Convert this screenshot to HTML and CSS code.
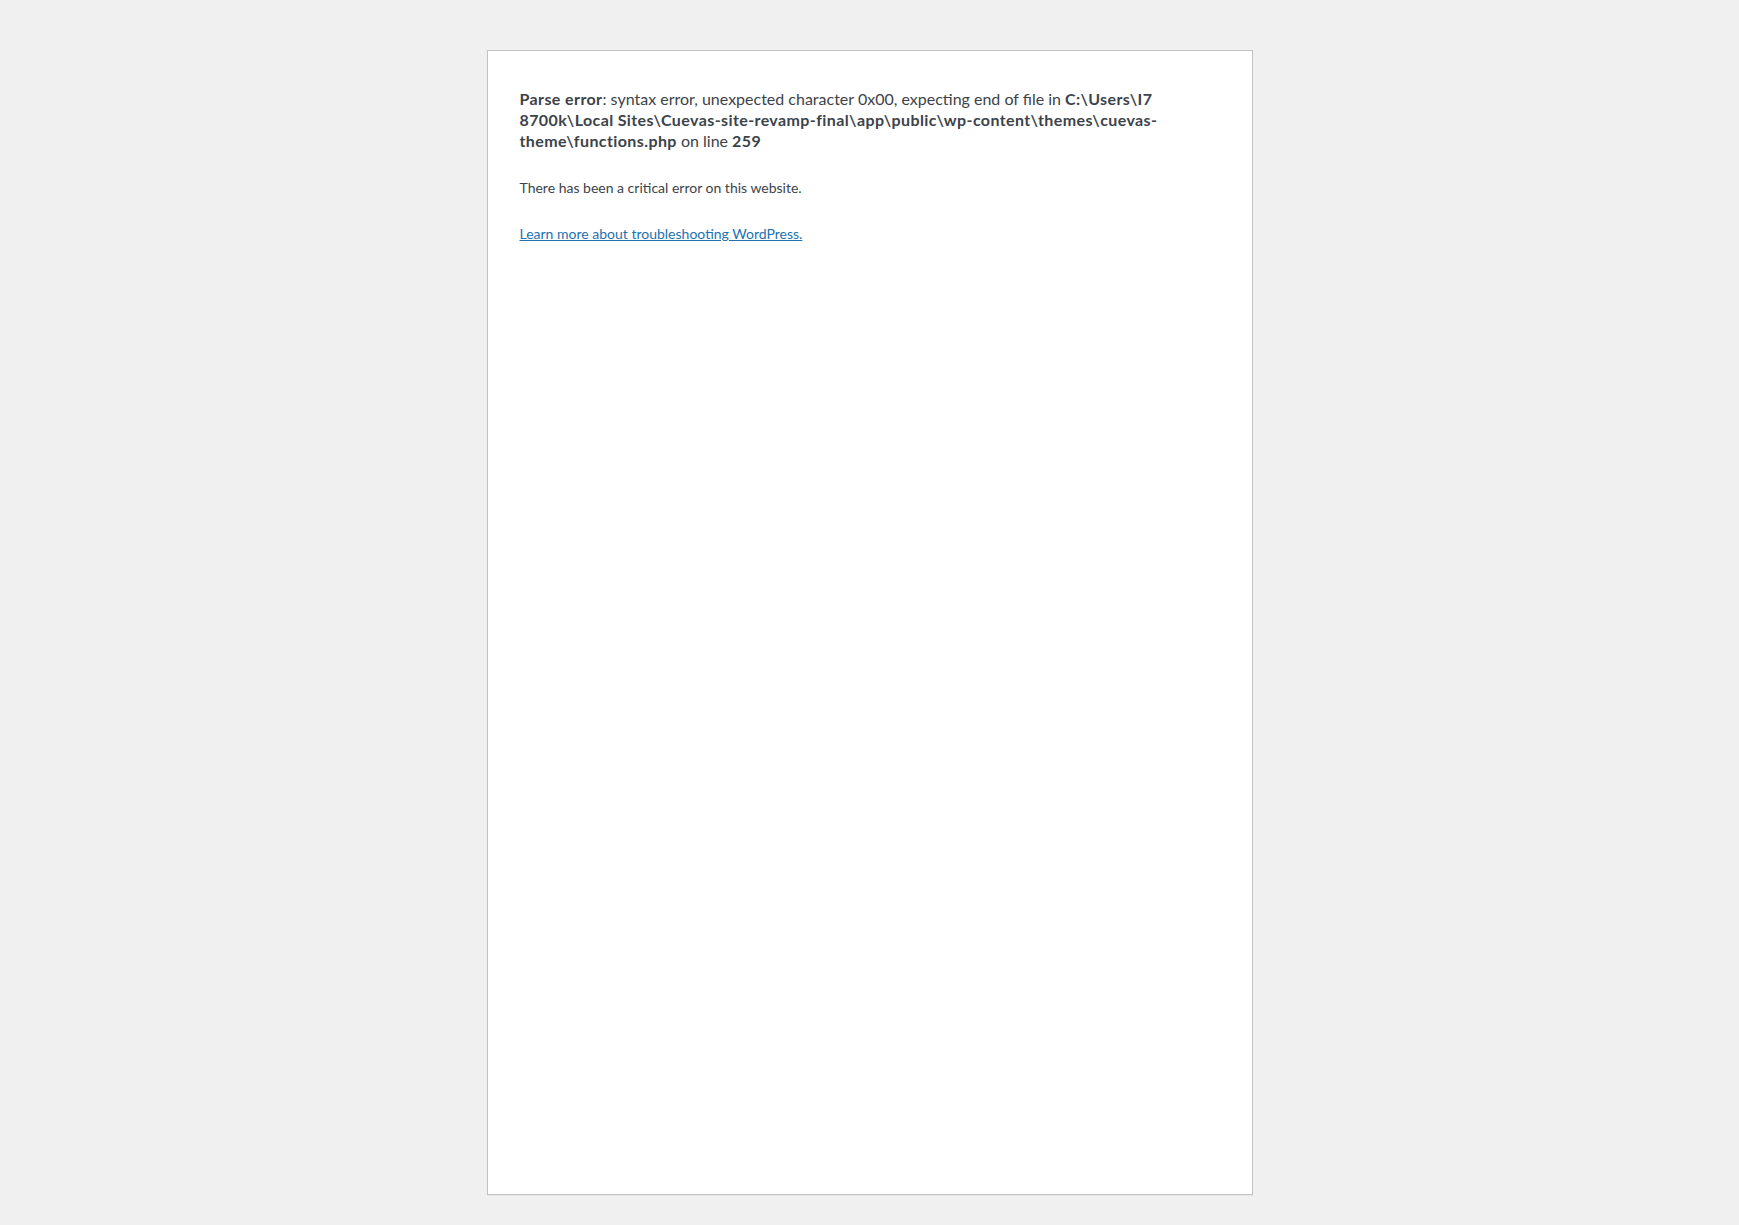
FILE: index.html
```html
<!DOCTYPE html>
<html lang="en-US">
<head>
<meta charset="utf-8">
<title>WordPress › Error</title>
<link rel="stylesheet" href="styles.css">
</head>
<body class="error-page">
<div class="parse"><b>Parse error</b>: syntax error, unexpected character 0x00, expecting end of file in <b>C:\Users\I7</b> <b>8700k\Local</b> <b>Sites\Cuevas-site-revamp-final\app\public\wp-content\themes\cuevas-</b><b>theme\functions.php</b> on line <b>259</b></div>
<div class="die-message"><p>There has been a critical error on this website.</p><p><a href="#">Learn more about troubleshooting WordPress.</a></p></div>
</body>
</html>
```
FILE: styles.css
```css
html {
  background: #f0f0f1;
  margin: 0;
  padding: 0;
}
body.error-page {
  background: #fff;
  border: 1px solid #c3c4c7;
  color: #3c434a;
  font-family: Lato, "Noto Sans", sans-serif;
  margin: 50px auto 0;
  padding: 15.5px 32px 14px;
  max-width: 700px;
  height: 1113.5px;
  box-sizing: content-box;
  box-shadow: 0 1px 1px rgba(0, 0, 0, 0.04);
}
.parse {
  font-size: 16px;
  line-height: 21.33px;
  margin-top: 21.33px;
}
.parse b {
  font-weight: 700;
  letter-spacing: 0.4px;
}
.die-message p {
  font-size: 14px;
  line-height: 21px;
  margin: 25px 0 20px;
}
.die-message a {
  color: #2271b1;
  text-decoration: underline;
}
```
